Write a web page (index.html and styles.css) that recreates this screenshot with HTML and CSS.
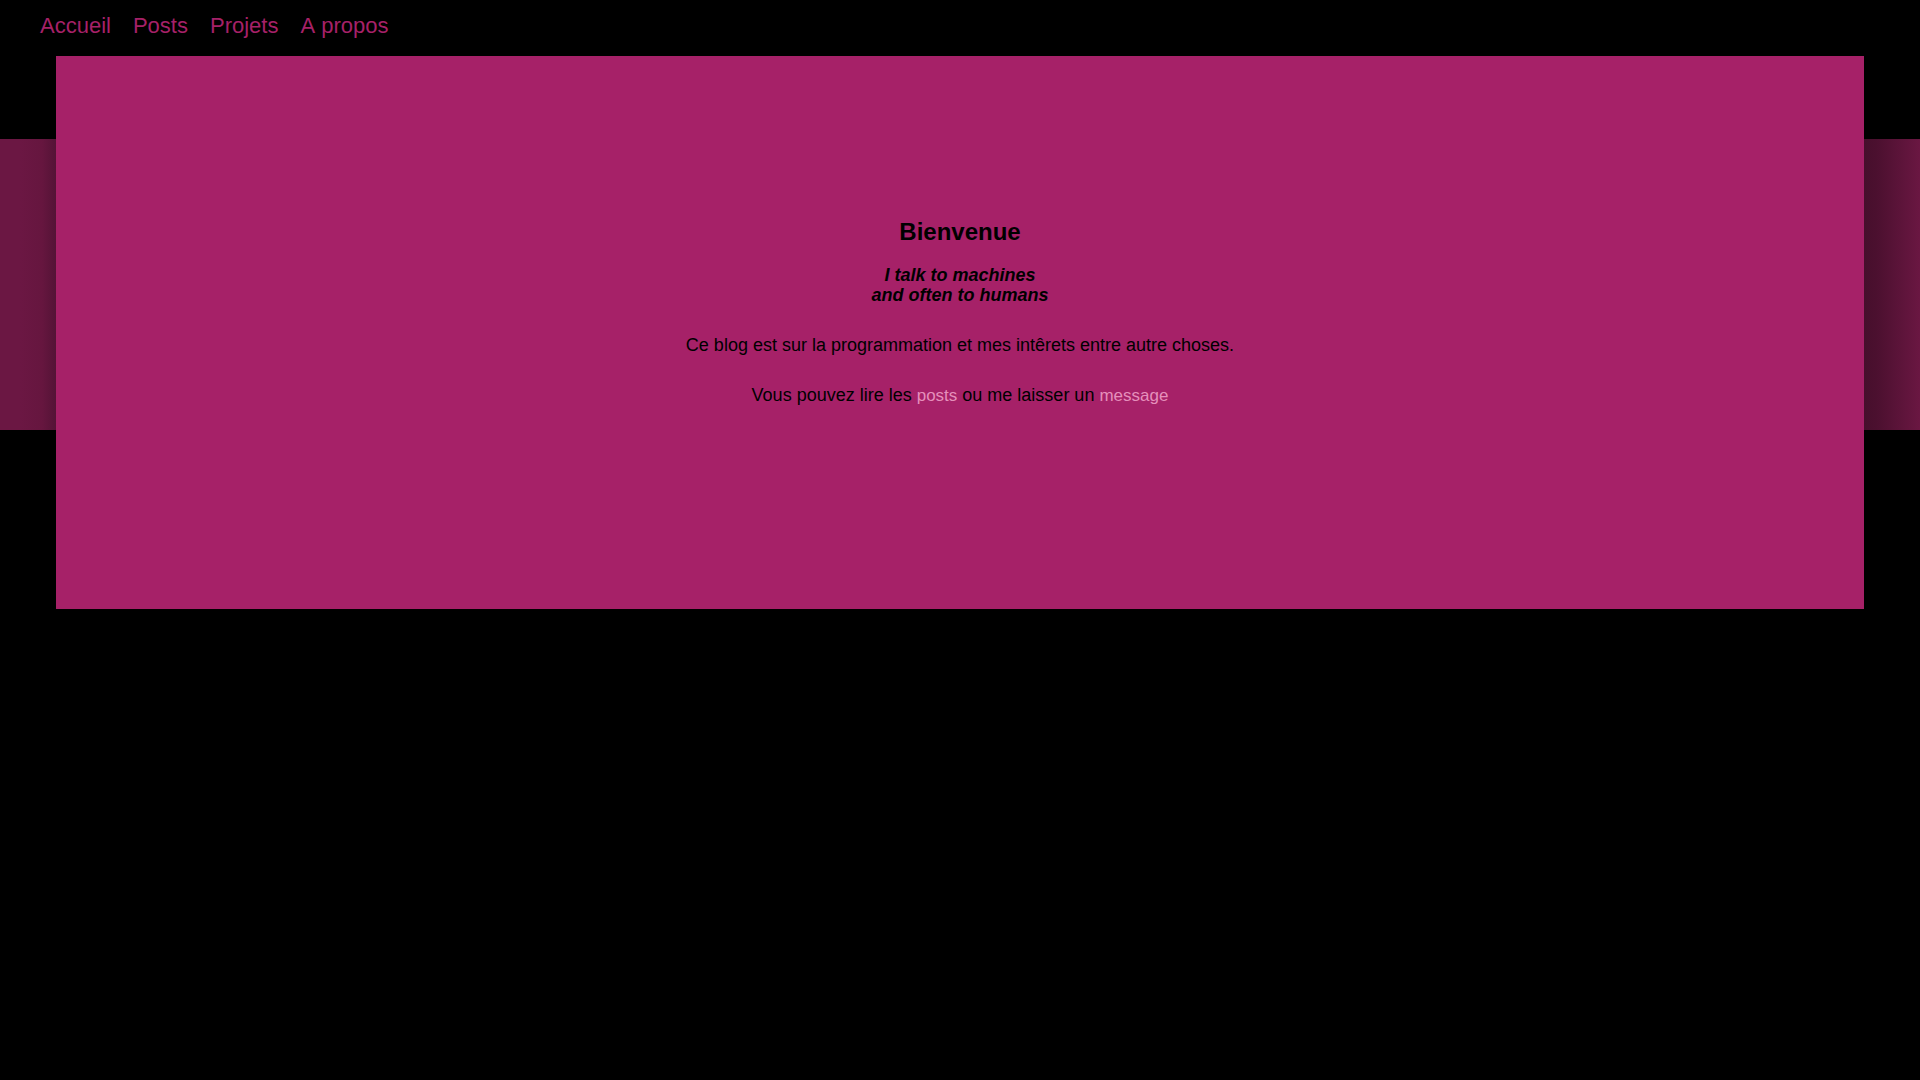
FILE: index.html
```html
<!DOCTYPE html>
<html lang="fr">
<head>
<meta charset="utf-8">
<title>Accueil</title>
<link rel="stylesheet" href="styles.css">
</head>
<body>
<nav class="menu">
<a href="#">Accueil</a>
<a href="#posts">Posts</a>
<a href="#projets">Projets</a>
<a href="#apropos">A&nbsp;propos</a>
</nav>
<main class="stage">
<section class="hero">
<h1 class="title">Bienvenue</h1>
<h2 class="tagline">I talk to machines<br>and often to humans</h2>
<p class="text">Ce blog est sur la programmation et mes intêrets entre autre choses.</p>
<p class="text">Vous pouvez lire les <a href="#posts">posts</a> ou me laisser un <a href="#message">message</a></p>
</section>
</main>
</body>
</html>
```
FILE: styles.css
```css
* { box-sizing: border-box; }

body {
  margin: 0;
  background: #000;
  color: #000;
  font-family: "Liberation Sans", Arial, sans-serif;
}

a { text-decoration: none; }

.menu {
  display: flex;
  gap: 22px;
  padding: 12px 40px;
  height: 56px;
  font-size: 22px;
  line-height: 28px;
}

.menu a { color: #a62168; }

/* Shaded band that shows on both sides of the hero */
.stage {
  padding: 0 56px;
  background:
    linear-gradient(90deg, #6b1743, #6b1743 20px, #66163f 42px, #541336 56px) left 83px / 56px 291px no-repeat,
    linear-gradient(90deg, #470f2c, #4b102f 12px, #6a1742) right 83px / 56px 291px no-repeat;
}

.hero {
  display: flex;
  flex-direction: column;
  align-items: center;
  padding: 160px 24px 173px;
  background: #a62168;
  text-align: center;
}

.title {
  margin: 0 0 17px;
  font-size: 24px;
  line-height: 32px;
}

.tagline {
  margin: 0 0 30px;
  font-size: 18px;
  font-style: italic;
  line-height: 20px;
}

.text {
  margin: 0 0 30px;
  font-size: 18px;
  line-height: 20px;
}

.text a {
  color: #e58fbb;
  font-size: 17px;
}
```
